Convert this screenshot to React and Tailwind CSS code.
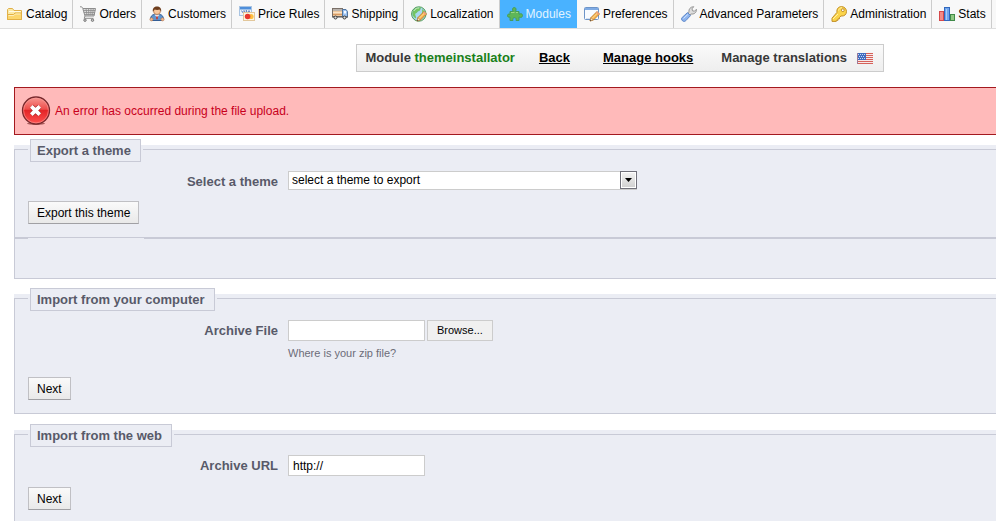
import React, { useRef, useState } from 'react';
import clsx from 'clsx';

/* ---------- 16px icons ---------- */

const FolderIcon = () => (
  <svg width="16" height="16" viewBox="0 0 16 16" className="shrink-0" aria-hidden="true">
    <path d="M.5 13.500v-10l1-1h4l1.500 2h7.500v9z" fill="#fbe9a4" stroke="#e0b04a" />
    <path d="M2 5.500h11.500" stroke="#fffbe6" />
    <path d="M.5 13.500V8.500h6l1.500-1.500h6.500v6.500z" fill="#fbd66d" stroke="#e3b044" />
    <path d="M1.500 9.500h5.400l1.500-1.500h5" fill="none" stroke="#fdf0bd" />
  </svg>
);

const CartIcon = () => (
  <svg width="16" height="16" viewBox="0 0 16 16" className="shrink-0" aria-hidden="true">
    <path d="M3 2.500h12.500l-1.500 7.500H5z" fill="#dedede" />
    <path d="M3.300 4.500h12M3.800 6.500h11M4.500 8.500h10M6 2.500l1 7M8.500 2.500l.4 7M11 2.500l-.2 7M13.300 2.500l-.8 7" stroke="#8b8b8b" fill="none" strokeWidth=".8" />
    <path d="M0 .8c1.800-.3 2.500.5 2.800 1.700L5 10h9l1.500-7.500H3" fill="none" stroke="#8d8d8d" />
    <path d="M5 10l-.8 2.300H13.500" fill="none" stroke="#8d8d8d" />
    <circle cx="5" cy="14.200" r="1.200" fill="#ccc" stroke="#777" />
    <circle cx="12.500" cy="14.200" r="1.200" fill="#ccc" stroke="#777" />
  </svg>
);

const CustomerIcon = () => (
  <svg width="16" height="16" viewBox="0 0 16 16" className="shrink-0" aria-hidden="true">
    <path d="M1.500 13.500c0-3 1.500-5 4-5h5c2.500 0 4 2 4 5l-1 1h-11z" fill="#5f95cf" stroke="#335e96" />
    <path d="M5.500 8.500l2.500 3 2.500-3z" fill="#fff" />
    <path d="M8 9l-1 3 1 2 1-2z" fill="#c9362c" />
    <circle cx="2.500" cy="13.300" r="1.600" fill="#f0b78c" stroke="#a8683f" strokeWidth=".5" />
    <circle cx="13.500" cy="13.300" r="1.600" fill="#f0b78c" stroke="#a8683f" strokeWidth=".5" />
    <circle cx="8" cy="5" r="3.500" fill="#f7c79d" stroke="#a8683f" strokeWidth=".7" />
    <path d="M3.800 5.500C3.500 2 5.300.5 8 .5S12.500 2 12.200 5.500c-.7-.5-1-1.500-1.200-2-1.800.6-4 .6-5.500 0-.2.800-.8 1.500-1.700 2z" fill="#6d3d1d" />
  </svg>
);

const PriceIcon = () => (
  <svg width="16" height="16" viewBox="0 0 16 16" className="shrink-0" aria-hidden="true">
    <rect x=".5" y=".5" width="12" height="9" fill="#eef4fb" stroke="#a9c4e2" />
    <rect x="1" y="1" width="11" height="2.500" fill="#4f8fdb" />
    <path d="M2.500 4.500l1 2 1-2M5.500 4.500v2M8 4.500H7v1h1v1H7M9 6.500l1-2 1 2" fill="none" stroke="#5277ba" strokeWidth=".8" />
    <rect x="4.500" y="6.500" width="11" height="8" fill="#fdf5e2" stroke="#e2c79b" />
    <circle cx="12" cy="10.500" r="2.600" fill="#ffbf3f" />
    <circle cx="8.600" cy="10.500" r="2.800" fill="#e8382f" />
  </svg>
);

const TruckIcon = () => (
  <svg width="16" height="16" viewBox="0 0 16 16" className="shrink-0" aria-hidden="true">
    <rect x=".5" y="2.500" width="10" height="8" fill="#efc79c" stroke="#7a7068" />
    <path d="M1 4h9" stroke="#b9b2ac" strokeWidth="2" />
    <path d="M1 6.500h9" stroke="#fbe4c8" />
    <path d="M1 8.500h9" stroke="#d79a62" />
    <path d="M10.500 3.500h3.500l1.500 2v5.500h-5z" fill="#9cc3f2" stroke="#52759f" />
    <rect x="12" y="5" width="2" height="2.500" fill="#f5faff" />
    <path d="M0 11h16" stroke="#555" />
    <circle cx="3.500" cy="11.500" r="1.500" fill="#ddd" stroke="#3c3c3c" />
    <circle cx="12.500" cy="11.500" r="1.500" fill="#ddd" stroke="#3c3c3c" />
  </svg>
);

const Pencil = () => (
  <>
    <path d="M6 15l1-3.500 6-6 2.500 2.500-6 6z" fill="#f6b34c" stroke="#b8741f" strokeWidth=".8" />
    <path d="M8 12.500l6-6" stroke="#ffe0a0" />
    <path d="M12 6.500l1-1 2.500 2.500-1 1z" fill="#ef9a80" />
    <path d="M6 15l1-3.300 2.300 2.300z" fill="#fbe3c0" stroke="#9b7040" strokeWidth=".5" />
    <path d="M6 15l.4-1.300.9.9z" fill="#333" />
  </>
);

const GlobeIcon = () => (
  <svg width="16" height="16" viewBox="0 0 16 16" className="shrink-0" aria-hidden="true">
    <circle cx="7.800" cy="8" r="7.200" fill="#a9d8f0" stroke="#4d9a54" />
    <path d="M1.500 6C3 2.500 6 1 9.500 1.500c1 1.500-.5 2-1 3.500-2 0-2 2-4 2.500C3.500 9 5.500 10 5 12.500 2 11 1 9 1.500 6z" fill="#74c463" />
    <path d="M3 5c1-2 3-3 5-3" stroke="#c4ebb2" fill="none" />
    <path d="M11 3c2 1 3.500 3 3.500 5.500L11 10z" fill="#82c971" />
    <Pencil />
  </svg>
);

const PuzzleIcon = () => (
  <svg width="16" height="16" viewBox="0 0 16 16" className="shrink-0" aria-hidden="true">
    <path
      d="M3 5.500h3.200C5 3.500 5.500 1.500 7.300 1.500S9.500 3.500 8.600 5.500H12v2.700c2-1 3.500-.4 3.500 1.300S14 11.900 12 11v3.500H9c.4-1.800-.1-2.800-1.500-2.800S5.500 12.700 6 14.500H3V11c-1.500.6-2.500 0-2.500-1.400S1.500 7.800 3 8.300z"
      fill="#5fb657"
      stroke="#459c5c"
    />
    <path d="M4 6.500h3.500M9 6.500h2" stroke="#9bd882" />
  </svg>
);

const PreferencesIcon = () => (
  <svg width="16" height="16" viewBox="0 0 16 16" className="shrink-0" aria-hidden="true">
    <rect x=".5" y="1.500" width="14" height="12" rx="1" fill="#f8fbff" stroke="#6d94c8" />
    <path d="M1 3h13" stroke="#7fabe4" strokeWidth="2" />
    <path d="M2 12.500h5" stroke="#d5e2f3" />
    <Pencil />
  </svg>
);

const WrenchIcon = () => (
  <svg width="16" height="16" viewBox="0 0 16 16" className="shrink-0" aria-hidden="true">
    <path d="M8 6.300C7.500 3 9.500.8 12.700.7L11 2.800l.5 2 2 .4L15.400 3.300C15.800 6.500 13 8.500 10 8L8.500 9.300 6.700 7.500z" fill="#dedede" stroke="#8b8b8b" strokeWidth=".9" />
    <path d="M6.500 6.600l3 3-4.600 5c-1 1.100-2.500 1-3.500.1S.2 12.300 1.200 11.400z" fill="#8db4ee" stroke="#547fc4" strokeWidth=".9" />
    <path d="M2.500 12.500l4.300-4" stroke="#d3e4fd" />
  </svg>
);

const KeyIcon = () => (
  <svg width="16" height="16" viewBox="0 0 16 16" className="shrink-0" aria-hidden="true">
    <path
      d="M6 6.300C5.400 3 7.500.6 10.400.6s5.100 2.200 5.100 5S13.300 10.500 10 10L8.500 11.400v1.400H7v1.500H5.300v1.100H1v-3.200z"
      fill="#fbd44a"
      stroke="#c2902a"
    />
    <path d="M2 13l5-5M7.500 4.500C8 2.500 9.500 1.700 11 1.700" stroke="#fff1a8" fill="none" />
    <circle cx="11.800" cy="4.200" r="1.400" fill="#fff" stroke="#b98520" strokeWidth=".9" />
  </svg>
);

const StatsIcon = () => (
  <svg width="16" height="16" viewBox="0 0 16 16" className="shrink-0" aria-hidden="true">
    <rect x=".5" y="5.500" width="4" height="9" fill="#f48a85" stroke="#d5484a" />
    <rect x="5.500" y="1.500" width="5" height="13" fill="#6ea5ee" stroke="#3268bd" />
    <path d="M7.500 3v11" stroke="#a8cbfa" />
    <rect x="11.500" y="8.500" width="4" height="6" fill="#90c983" stroke="#408a48" />
  </svg>
);

const FlagIcon = () => (
  <svg width="16" height="11" viewBox="0 0 16 11" className="block" aria-hidden="true">
    <rect width="16" height="11" fill="#f6e9e9" />
    <path d="M0 .5h16M0 2.500h16M0 4.500h16M0 6.500h16M0 8.500h16M0 10.500h16" stroke="#d5615a" />
    <rect width="9" height="7" fill="#3f6cc0" />
    <path d="M1 1.500h8M0 3.500h8M1 5.500h8" stroke="#c9d8f2" strokeDasharray="1 1" />
    <path d="M.5 0v11" stroke="#9c7b98" />
  </svg>
);

const ErrorIcon = () => (
  <svg width="30" height="30" viewBox="0 0 30 30" className="shrink-0" aria-hidden="true">
    <defs>
      <linearGradient id="errorFill" x1="0" y1="0" x2="0" y2="1">
        <stop offset="0" stopColor="#f79a94" />
        <stop offset=".45" stopColor="#ee4d4b" />
        <stop offset=".5" stopColor="#e42527" />
        <stop offset="1" stopColor="#ff5150" />
      </linearGradient>
    </defs>
    <ellipse cx="15" cy="27.500" rx="9" ry="1.500" fill="#a85a5a" />
    <circle cx="15" cy="14.500" r="13.500" fill="url(#errorFill)" stroke="#77292d" strokeWidth="1.300" />
    <circle cx="15" cy="14.500" r="12.400" fill="none" stroke="#fa9c98" strokeWidth=".6" />
    <path d="M10.500 10.500l8 8M18.500 10.500l-8 8" stroke="#a32022" strokeWidth="5" />
    <path d="M10.300 10.300l8.400 8.400M18.700 10.300l-8.400 8.400" stroke="#fff" strokeWidth="3.800" />
  </svg>
);

const tabs = [
  { label: 'Catalog', icon: FolderIcon },
  { label: 'Orders', icon: CartIcon },
  { label: 'Customers', icon: CustomerIcon },
  { label: 'Price Rules', icon: PriceIcon },
  { label: 'Shipping', icon: TruckIcon },
  { label: 'Localization', icon: GlobeIcon },
  { label: 'Modules', icon: PuzzleIcon, active: true },
  { label: 'Preferences', icon: PreferencesIcon },
  { label: 'Advanced Parameters', icon: WrenchIcon },
  { label: 'Administration', icon: KeyIcon },
  { label: 'Stats', icon: StatsIcon },
];

/* ---------- form pieces ---------- */

function Panel({ title, className, children }) {
  return (
    <fieldset className={clsx('min-w-0 border border-r-0 border-[#c8cad6] bg-[#ebedf4] px-[13px] shadow-[0_-4px_0_#ebedf4]', className)}>
      {/* legend is shorter than its box so the border meets it a bit above the middle */}
      <legend className="h-[21px] px-[2px]">
        <span className="block h-[23px] border border-[#c8cad6] bg-[#ebedf4] pr-[9px] pl-[6px] text-[13px] leading-[22px] font-bold text-[#585a69]">
          {title}
        </span>
      </legend>
      {children}
    </fieldset>
  );
}

function Row({ label, htmlFor, children }) {
  return (
    <div className="flex items-start gap-[10px]">
      <label htmlFor={htmlFor} className="w-[250px] shrink-0 text-right text-[13px] leading-[22px] font-bold text-[#585a69]">
        {label}
      </label>
      <div>{children}</div>
    </div>
  );
}

function SubmitButton({ children, className }) {
  return (
    <button
      type="submit"
      className={clsx('block h-[23px] border border-[#c0c0c4] border-b-[#a0a0a4] bg-linear-to-b from-[#fafafa] to-[#e9e9e9] px-2 text-[12px] leading-[20px] text-black', className)}
    >
      {children}
    </button>
  );
}

export default function App() {
  const fileRef = useRef(null);
  const [fileName, setFileName] = useState('');
  const [url, setUrl] = useState('http://');

  return (
    <div className="flex min-h-screen flex-col bg-white font-['Liberation_Sans',Arial,sans-serif] text-[12px] text-black">
      {/* Main menu */}
      <nav className="overflow-hidden border-b border-[#dedede] bg-[#f8f8f8]">
        <ul className="flex">
          {tabs.map(({ label, icon: Icon, active }) => (
            <li key={label} className={clsx('shrink-0 border-r', active ? 'border-[#49b2ff] bg-[#49b2ff] text-[#e2f4ff]' : 'border-[#cccccc]')}>
              <a href="#" className="flex h-7 items-center gap-[3px] pr-[5px] pl-[7px]">
                <Icon />
                {label}
              </a>
            </li>
          ))}
        </ul>
      </nav>

      {/* Module toolbar */}
      <div className="mt-[15px] flex justify-end pr-28">
        <div className="flex h-7 items-center border border-[#cccccc] bg-linear-to-b from-[#fafafa] to-[#eeeeee] pr-[10px] pl-2 text-[13px] font-bold text-[#383838]">
          <span>
            Module <span className="text-[#1a801a]">themeinstallator</span>
          </span>
          <a href="#" className="ml-6 text-black underline">Back</a>
          <a href="#" className="ml-[33px] text-black underline">Manage hooks</a>
          <span className="ml-7">Manage translations</span>
          <a href="#" aria-label="English" className="ml-[10px]">
            <FlagIcon />
          </a>
        </div>
      </div>

      <main className="mt-[15px] flex grow flex-col pl-[14px]">
        <div role="alert" className="flex h-12 items-center gap-1 border border-r-0 border-[#a3191f] bg-[#ffbaba] pl-[6px] text-[#c8001c]">
          <ErrorIcon />
          An error has occurred during the file upload.
        </div>

        <Panel title="Export a theme" className="mt-1 pb-[13px]">
          <div className="mt-[11px]">
            <Row label="Select a theme" htmlFor="theme">
              <div className="relative w-[349px]">
                <select id="theme" className="block h-[19px] w-full appearance-none border border-[#cccccc] bg-white pl-[3px] text-[12px] leading-[17px] text-black">
                  <option>select a theme to export</option>
                </select>
                <span className="pointer-events-none absolute top-0 right-0 flex h-[18px] w-[17px] items-center justify-center border border-[#70707a] bg-linear-to-b from-[#f4f4f4] to-[#cfcfcf] ring-1 ring-white ring-inset">
                  <svg width="7" height="4" viewBox="0 0 7 4" aria-hidden="true">
                    <path d="M0 0h7L3.500 4z" fill="#000" />
                  </svg>
                </span>
              </div>
            </Row>
          </div>
          <SubmitButton className="mt-2">Export this theme</SubmitButton>
        </Panel>

        <fieldset className="h-[41px] border border-r-0 border-[#c8cad6] bg-[#ebedf4] px-[13px]">
          <legend className="h-px w-[116px]" />
        </fieldset>

        <Panel title="Import from your computer" className="mt-[9px] pb-[13px]">
          <div className="mt-[11px]">
            <Row label="Archive File" htmlFor="archive-name">
              <div className="flex gap-[2px]">
                <input
                  id="archive-name"
                  type="text"
                  readOnly
                  value={fileName}
                  className="h-[21px] w-[137px] border border-[#cccccc] bg-white px-1 text-[12px]"
                />
                <button
                  type="button"
                  onClick={() => fileRef.current.click()}
                  className="h-[21px] border border-[#cccccc] bg-[#f0f0f0] px-[9px] text-[11px] leading-[19px] text-black"
                >
                  Browse...
                </button>
                <input
                  ref={fileRef}
                  type="file"
                  aria-label="Archive File"
                  className="hidden"
                  onChange={e => setFileName(e.target.files[0]?.name || '')}
                />
              </div>
              <p className="mt-1 text-[11px] leading-4 text-[#6b6c78]">Where is your zip file?</p>
            </Row>
          </div>
          <SubmitButton className="mt-4">Next</SubmitButton>
        </Panel>

        <Panel title="Import from the web" className="mt-[10px] grow border-b-0 pb-[10px]">
          <div className="mt-[10px]">
            <Row label="Archive URL" htmlFor="archive-url">
              <input
                id="archive-url"
                type="text"
                value={url}
                onChange={e => setUrl(e.target.value)}
                className="block h-[21px] w-[137px] border border-[#cccccc] bg-white px-1 text-[12px]"
              />
            </Row>
          </div>
          <SubmitButton className="mt-[10px]">Next</SubmitButton>
        </Panel>
      </main>
    </div>
  );
}
